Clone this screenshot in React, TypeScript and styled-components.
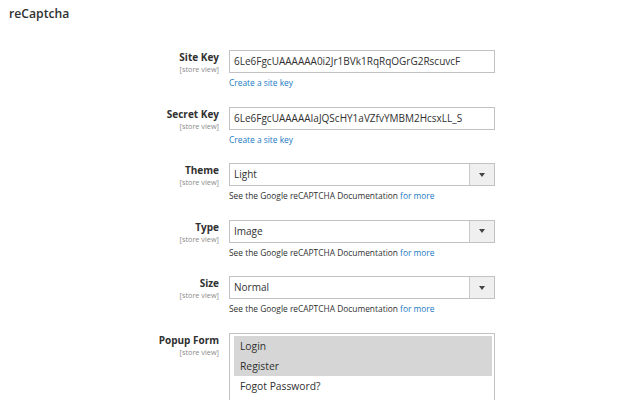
import React from "react";
import styled, { createGlobalStyle } from "styled-components";

const GlobalStyle = createGlobalStyle`
    body {
        margin: 0;
        background: #ffffff;
        font-family: "Open Sans", "Liberation Sans", sans-serif;
        color: #333333;
    }
`;

interface IField {
    label: string;
    kind: "text" | "select";
    value: string;
    note: "key" | "doc";
}

const fields: IField[] = [
    { label: "Site Key", kind: "text", value: "6Le6FgcUAAAAAA0i2Jr1BVk1RqRqOGrG2RscuvcF", note: "key" },
    { label: "Secret Key", kind: "text", value: "6Le6FgcUAAAAAIaJQScHY1aVZfvYMBM2HcsxLL_S", note: "key" },
    { label: "Theme", kind: "select", value: "Light", note: "doc" },
    { label: "Type", kind: "select", value: "Image", note: "doc" },
    { label: "Size", kind: "select", value: "Normal", note: "doc" },
];

const popupOptions = [
    { name: "Login", selected: true },
    { name: "Register", selected: true },
    { name: "Fogot Password?", selected: false },
];

function renderNote(note: "key" | "doc") {
    if (note === "key")
        return <Link>Create a site key</Link>;

    return (
        <>
            See the Google reCAPTCHA Documentation <Link>for more</Link>
        </>
    );
}

export default function App() {
    return (
        <Page>
            <GlobalStyle />
            <Title>reCaptcha</Title>
            <Form>
                {fields.map((field) => (
                    <Row key={field.label}>
                        <Label>
                            <LabelText>{field.label}</LabelText>
                            <Scope>[store view]</Scope>
                        </Label>
                        <Control>
                            {field.kind === "text" ? (
                                <TextBox>{field.value}</TextBox>
                            ) : (
                                <SelectBox>
                                    <SelectValue>{field.value}</SelectValue>
                                    <SelectButton>
                                        <Arrow />
                                    </SelectButton>
                                </SelectBox>
                            )}
                            <Note>{renderNote(field.note)}</Note>
                        </Control>
                    </Row>
                ))}
                <Row>
                    <Label>
                        <LabelText>Popup Form</LabelText>
                        <Scope>[store view]</Scope>
                    </Label>
                    <Control>
                        <MultiSelect>
                            {popupOptions.map((opt) => (
                                <Option key={opt.name} $selected={opt.selected}>
                                    {opt.name}
                                </Option>
                            ))}
                        </MultiSelect>
                    </Control>
                </Row>
            </Form>
        </Page>
    );
}

const Page = styled.div`
    width: 624px;
    height: 400px;
    overflow: hidden;
    box-sizing: border-box;
    padding: 5px 0 0 9px;
`;

const Title = styled.div`
    font-size: 12.2px;
    line-height: 18px;
    font-weight: 600;
    color: #303030;
`;

const Form = styled.div`
    margin-top: 27px;
    display: flex;
    flex-direction: column;
    gap: 16.5px;
`;

const Row = styled.div`
    display: grid;
    grid-template-columns: 210px 266px;
    column-gap: 10px;
    align-items: start;
`;

const Label = styled.div`
    display: flex;
    flex-direction: column;
    align-items: flex-end;
    text-align: right;
`;

const LabelText = styled.div`
    font-size: 10px;
    line-height: 14px;
    font-weight: 700;
    color: #303030;
`;

const Scope = styled.div`
    font-size: 7.3px;
    line-height: 10px;
    color: #8a8a8a;
`;

const Control = styled.div`
    display: flex;
    flex-direction: column;
`;

const TextBox = styled.div`
    height: 23px;
    box-sizing: border-box;
    border: 1px solid #c2c2c2;
    padding: 0 4px;
    font-size: 10px;
    line-height: 21px;
    color: #303030;
    white-space: nowrap;
    overflow: hidden;
`;

const SelectBox = styled.div`
    height: 23px;
    box-sizing: border-box;
    border: 1px solid #c2c2c2;
    display: flex;
    align-items: stretch;
`;

const SelectValue = styled.div`
    flex: 1;
    padding: 0 4px;
    font-size: 10px;
    line-height: 21px;
    color: #303030;
`;

const SelectButton = styled.div`
    width: 24px;
    border-left: 1px solid #c8c8c8;
    background: #efefef;
    display: flex;
    align-items: center;
    justify-content: center;
`;

const Arrow = styled.div`
    width: 0;
    height: 0;
    border-left: 3px solid transparent;
    border-right: 3px solid transparent;
    border-top: 4px solid #444;
`;

const Note = styled.div`
    margin-top: 3px;
    font-size: 8.4px;
    line-height: 14px;
    color: #303030;
`;

const Link = styled.span`
    color: #1979c3;
`;

const MultiSelect = styled.div`
    height: 80px;
    box-sizing: border-box;
    border: 1px solid #c2c2c2;
    padding: 2px 2px 0 4px;
`;

const Option = styled.div<{ $selected: boolean }>`
    height: 20px;
    line-height: 20px;
    padding: 0 6px;
    font-size: 10.3px;
    color: #303030;
    background: ${(p) => (p.$selected ? "#d6d6d6" : "transparent")};
`;
